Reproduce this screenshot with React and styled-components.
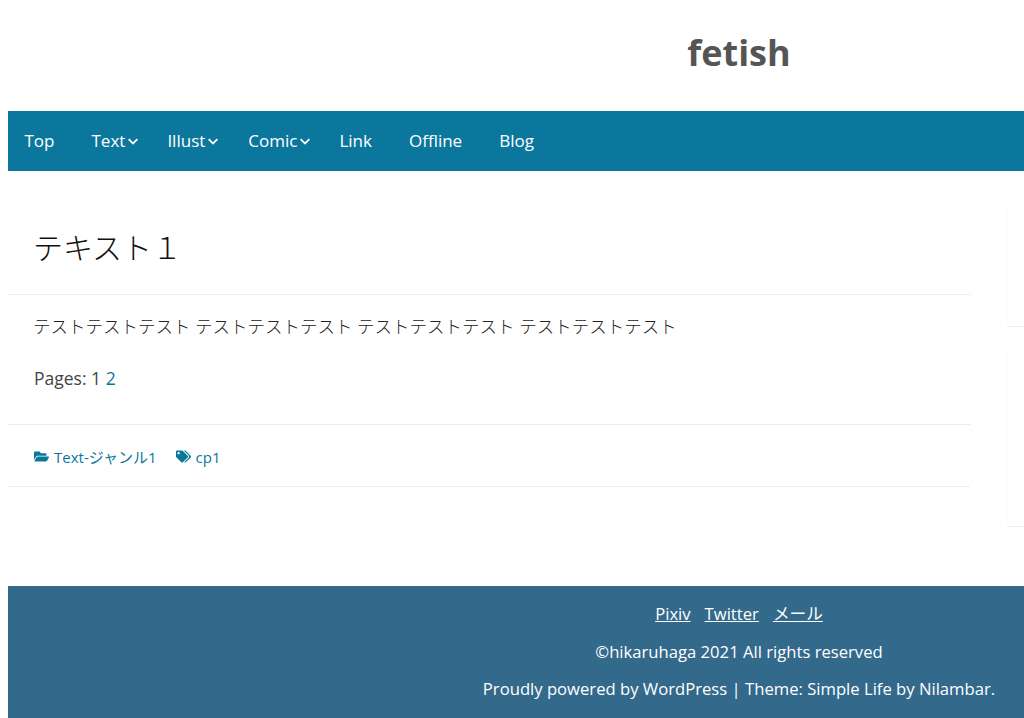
import React from "react";
import styled, { createGlobalStyle } from "styled-components";
import { FaFolderOpen, FaTags } from "react-icons/fa";

const Global = createGlobalStyle`
  body {
    margin: 0 0 0 8px;
    background: #fff;
    color: #444;
    font-family: "Open Sans", "Noto Sans CJK JP", sans-serif;
    font-size: 17px;
    overflow: hidden;
  }
`;

const Page = styled.div`
  width: 1016px;
`;

const Header = styled.header`
  height: 111px;
  display: flex;
  align-items: center;
  justify-content: center;
  padding: 0 0 6px 446px;
  box-sizing: border-box;
`;

const SiteTitle = styled.h1`
  margin: 0;
  font-size: 36px;
  font-weight: 700;
  color: #555;
`;

const Nav = styled.nav`
  height: 60px;
  background: #0c779d;
  display: flex;
  align-items: center;
  padding: 0 0 2px 16.5px;
  box-sizing: border-box;
`;

const NavItem = styled.a`
  display: flex;
  align-items: center;
  color: #fff;
  font-size: 17px;
  margin-right: ${(p) => p.$gap}px;
`;

const Chevron = styled.svg`
  width: 10px;
  height: 7px;
  margin-left: 3px;
  margin-top: 3px;
`;

const Content = styled.div`
  display: flex;
  align-items: flex-start;
  gap: 38px;
  padding-top: 39px;
  height: 376px;
`;

const Article = styled.article`
  width: 962px;
  flex-shrink: 0;
  background: #fff;
  box-shadow: 0 1px 1px rgba(0, 0, 0, 0.06), 0 0 2px rgba(0, 0, 0, 0.03);
`;

const ArticleHead = styled.div`
  height: 72px;
  display: flex;
  align-items: center;
  padding: 0 0 12px 25px;
  border-bottom: 1px solid #ececec;
`;

const ArticleTitle = styled.h2`
  margin: 0;
  font-size: 30px;
  font-weight: 300;
  color: #111;
`;

const ArticleBody = styled.div`
  height: 130px;
  padding: 18px 26px 0;
  box-sizing: border-box;
  border-bottom: 1px solid #ececec;
`;

const BodyText = styled.p`
  margin: 0 0 26px;
  font-size: 17.5px;
  line-height: 26px;
  font-weight: ${(p) => (p.$light ? 300 : 400)};
  color: ${(p) => (p.$light ? "#222" : "#444")};
`;

const JapaneseLine = styled(BodyText)`
  margin-left: -1px;
`;

const PageLink = styled.a`
  color: #0c779d;
`;

const Meta = styled.div`
  height: 61px;
  display: flex;
  align-items: center;
  padding: 2px 0 0 26px;
  box-sizing: border-box;
  font-size: 15px;
  color: #0c779d;
  gap: 19px;
`;

const MetaItem = styled.span`
  display: flex;
  align-items: center;
  gap: 5px;
  svg {
    font-size: 15px;
  }
`;

const Sidebar = styled.aside`
  display: flex;
  flex-direction: column;
  gap: 24px;
  width: 16px;
  margin-top: -3px;
`;

const Widget = styled.div`
  height: ${(p) => p.$height}px;
  background: #fff;
  box-shadow: 0 1px 1px rgba(0, 0, 0, 0.06), 0 0 2px rgba(0, 0, 0, 0.03);
`;

const Footer = styled.footer`
  height: 132px;
  background: #33698b;
  color: #fff;
  text-align: center;
  padding: 9px 0 0 446px;
  box-sizing: border-box;
  font-size: 16.65px;
`;

const FooterLine = styled.div`
  height: 37.5px;
  line-height: 37px;
`;

const FooterLink = styled.a`
  color: #fff;
  text-decoration: underline;
  margin: 0 7px;
`;

const items = [
  { label: "Top", gap: 37 },
  { label: "Text", gap: 29, sub: true },
  { label: "Illust", gap: 30, sub: true },
  { label: "Comic", gap: 29, sub: true },
  { label: "Link", gap: 37 },
  { label: "Offline", gap: 37 },
  { label: "Blog", gap: 0 },
];

const App = () => {
  return (
    <Page>
      <Global />
      <Header>
        <SiteTitle>fetish</SiteTitle>
      </Header>
      <Nav>
        {items.map((item) => (
          <NavItem key={item.label} $gap={item.gap}>
            {item.label}
            {item.sub && (
              <Chevron viewBox="0 0 10 7">
                <path d="M0.6 1.2 L5 5.4 L9.4 1.2" fill="none" stroke="#fff" strokeWidth="1.8" />
              </Chevron>
            )}
          </NavItem>
        ))}
      </Nav>
      <Content>
        <Article>
          <ArticleHead>
            <ArticleTitle>テキスト１</ArticleTitle>
          </ArticleHead>
          <ArticleBody>
            <JapaneseLine $light>テストテストテスト テストテストテスト テストテストテスト テストテストテスト</JapaneseLine>
            <BodyText>
              Pages: 1 <PageLink>2</PageLink>
            </BodyText>
          </ArticleBody>
          <Meta>
            <MetaItem>
              <FaFolderOpen />
              Text-ジャンル1
            </MetaItem>
            <MetaItem>
              <FaTags />
              cp1
            </MetaItem>
          </Meta>
        </Article>
        <Sidebar>
          <Widget $height={119} />
          <Widget $height={176} />
        </Sidebar>
      </Content>
      <Footer>
        <FooterLine>
          <FooterLink>Pixiv</FooterLink>
          <FooterLink>Twitter</FooterLink>
          <FooterLink>メール</FooterLink>
        </FooterLine>
        <FooterLine>©hikaruhaga 2021 All rights reserved</FooterLine>
        <FooterLine>Proudly powered by WordPress | Theme: Simple Life by Nilambar.</FooterLine>
      </Footer>
    </Page>
  );
};

export default App;
